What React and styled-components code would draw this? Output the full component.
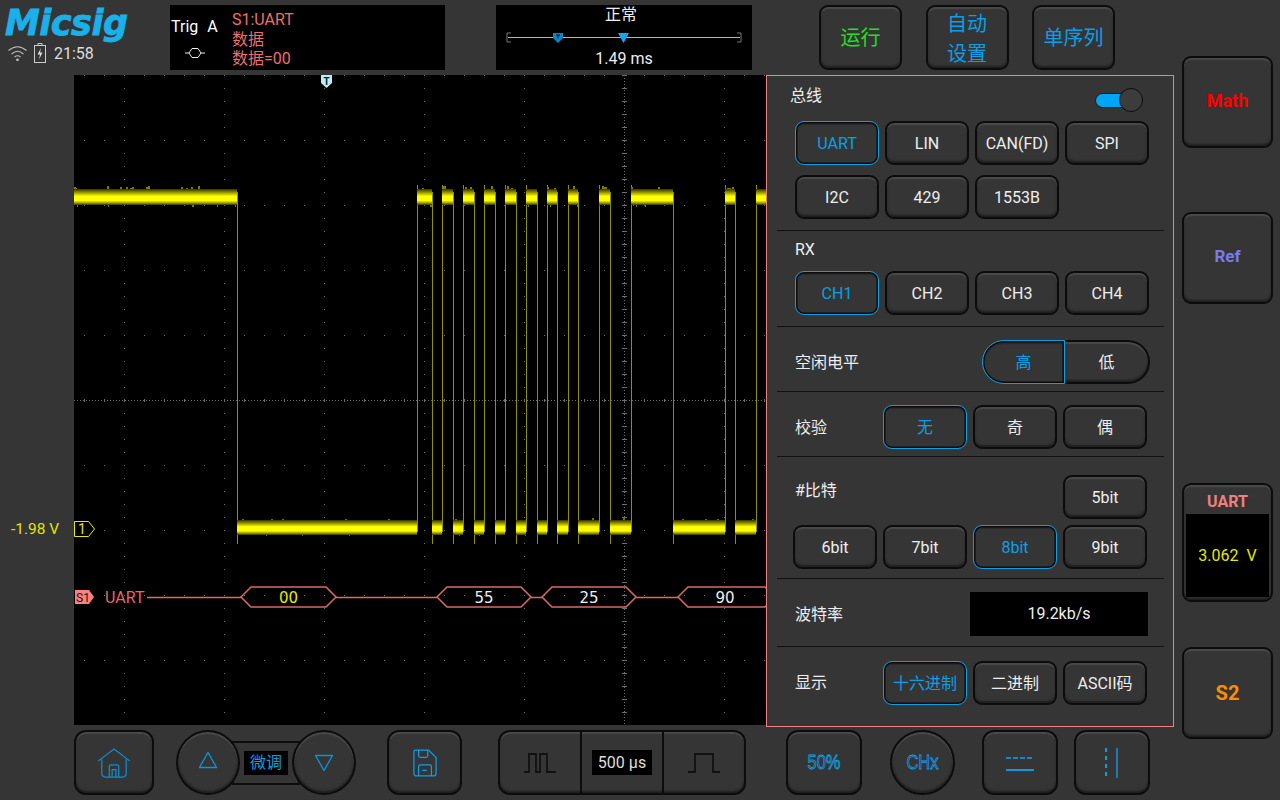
import React from 'react';
import styled, {createGlobalStyle} from 'styled-components';

const BLUE = '#0b9fe6';
const PINK = '#f08080';
const BG = '#353535';

const GlobalStyle = createGlobalStyle`
  html, body {
    margin: 0;
    padding: 0;
    background: ${BG};
    font-family: Roboto, "Noto Sans CJK SC", sans-serif;
    color: #eee;
  }
`;

const Page = styled.div`
  width: 1280px;
  height: 800px;
  display: flex;
  overflow: hidden;
  background: ${BG};
`;

const Main = styled.div`
  width: 1174px;
  display: flex;
  flex-direction: column;
`;

const TopBar = styled.div`
  height: 75px;
  box-sizing: border-box;
  padding-top: 5px;
  display: flex;
  align-items: flex-start;
`;

const Brand = styled.div`
  width: 170px;
  box-sizing: border-box;
  padding-left: 5px;
`;

const Logo = styled.div`
  font-family: "DejaVu Sans", sans-serif;
  font-weight: 700;
  font-style: italic;
  font-size: 35px;
  line-height: 36px;
  letter-spacing: -0.5px;
  color: #1ab0ea;
  -webkit-text-stroke: 0.8px #1ab0ea;
`;

const Status = styled.div`
  display: flex;
  align-items: center;
  gap: 6px;
  padding-left: 2px;
  height: 24px;
  font-size: 16px;
  color: #ddd;
`;

const StatusTime = styled.span`
  margin-left: 2px;
`;

const TrigBox = styled.div`
  width: 275px;
  height: 65px;
  background: #000;
  display: flex;
`;

const TrigLeft = styled.div`
  width: 62px;
  padding-left: 1px;
  box-sizing: border-box;
`;

const TrigName = styled.div`
  display: flex;
  gap: 9px;
  font-size: 16px;
  line-height: 20px;
  margin-top: 12px;
  color: #fff;
`;

const TrigSymbol = styled.svg`
  display: block;
  margin: 10px 0 0 14px;
`;

const TrigInfo = styled.div`
  font-size: 16px;
  line-height: 19.500px;
  padding-top: 5px;
  color: #ee6e6e;
`;

const TimeBox = styled.div`
  width: 256px;
  height: 65px;
  margin-left: 51px;
  background: #000;
  display: flex;
  flex-direction: column;
  align-items: center;
  font-size: 16px;
  color: #eee;
`;

const TimeTitle = styled.div`
  line-height: 20px;
  margin-right: 6px;
`;

const SliderSvg = styled.svg`
  display: block;
  margin-top: 4px;
`;

const TimeValue = styled.div`
  line-height: 20px;
`;

const TopButtons = styled.div`
  display: flex;
  gap: 23.500px;
  margin-left: 67px;
`;

const Key = styled.div`
  box-sizing: border-box;
  display: flex;
  align-items: center;
  justify-content: center;
  background: ${BG};
  border: 2px solid #0c0c0c;
  border-radius: ${p => p.$radius || 9}px;
  box-shadow: inset 0 2px 1px #4a4a4a, inset 0 -2px 2px #1f1f1f;
  text-align: center;
`;

const TopKey = styled(Key)`
  width: 83px;
  height: 65px;
  padding-top: ${p => p.$twoLines ? 2 : 0}px;
  font-size: 20px;
  line-height: 30px;
  color: ${p => p.$color || BLUE};
`;

const Middle = styled.div`
  height: 650px;
  display: flex;
  align-items: flex-start;
`;

const Gutter = styled.div`
  width: 74px;
  box-sizing: border-box;
  padding: 444px 0 0 11px;
  font-size: 15.500px;
  line-height: 20px;
  color: #e4e400;
`;

const ScreenSvg = styled.svg`
  display: block;
  width: 692px;
  height: 650px;
  background: #000;
`;

const TraceName = styled.text`
  font-family: Roboto, sans-serif;
  font-size: 16px;
  fill: #e06a6a;
`;

const ByteText = styled.text`
  font-family: "DejaVu Sans", sans-serif;
  font-size: 15px;
  text-anchor: middle;
  fill: ${p => p.$color || '#eee'};
`;

const MarkText = styled.text`
  font-family: Roboto, sans-serif;
  font-weight: ${p => p.$weight || 400};
  font-size: ${p => p.$size}px;
  text-anchor: middle;
  fill: ${p => p.$color};
`;

const Panel = styled.div`
  width: 408px;
  height: 652px;
  box-sizing: border-box;
  border: 1px solid ${PINK};
  background: ${BG};
  display: flex;
  flex-direction: column;
`;

const Section = styled.div`
  height: ${p => p.$height}px;
  box-sizing: border-box;
  margin: 0 9px 0 10px;
  padding-top: ${p => p.$top || 0}px;
  border-bottom: ${p => p.$last ? 'none' : '1px solid #111'};
`;

const Head = styled.div`
  height: ${p => p.$height}px;
  display: flex;
  justify-content: space-between;
  align-items: flex-start;
  padding-left: ${p => p.$indent}px;
`;

const Label = styled.div`
  font-size: 16px;
  line-height: 20px;
  margin-top: ${p => p.$top || 0}px;
  color: #eee;
`;

const Toggle = styled.div`
  position: relative;
  width: 34px;
  height: 13px;
  margin: 18px 34px 0 0;
  border-radius: 7px;
  background: #00a6f5;
  box-shadow: 0 0 0 1px #222;
`;

const Knob = styled.div`
  position: absolute;
  right: -13px;
  top: -6px;
  width: 24px;
  height: 24px;
  box-sizing: border-box;
  border-radius: 50%;
  border: 1px solid #0c0c0c;
  background: #3c3c3c;
`;

const ButtonGrid = styled.div`
  display: grid;
  grid-template-columns: repeat(4, 84px);
  grid-auto-rows: 44px;
  gap: 10px 6px;
  padding-left: ${p => p.$indent ?? 18}px;
`;

const OptKey = styled(Key)`
  width: 84px;
  height: 44px;
  font-size: 16px;
  padding-bottom: ${p => p.$cjk ? 2 : 0}px;
  color: ${p => p.$on ? BLUE : '#eee'};
  ${p => p.$on && `
    border: 1px solid ${BLUE};
    box-shadow: inset 0 0 0 1.500px #0c0c0c, inset 0 3px 1px #2a2a2a;
  `}
`;

const OptionRow = styled.div`
  height: 100%;
  display: flex;
  align-items: center;
  justify-content: space-between;
  padding: 0 ${p => p.$right ?? 17}px 0 18px;
`;

const OptKeys = styled.div`
  display: flex;
  gap: 6px;
`;

const Segmented = styled.div`
  display: flex;
  width: 168px;
  height: 44px;
`;

const SegKey = styled(OptKey)`
  width: ${p => p.$on ? 83 : 85}px;
  border-radius: ${p => p.$on ? '22px 0 0 22px' : '0 22px 22px 0'};
  ${p => !p.$on && 'border-left: none;'}
`;

const BitsTop = styled.div`
  display: flex;
  justify-content: space-between;
  padding: 0 17px 6px 18px;
`;

const BaudField = styled.div`
  width: 178px;
  height: 44px;
  background: #000;
  display: flex;
  align-items: center;
  justify-content: center;
  font-size: 16px;
  color: #eee;
`;

const BottomBar = styled.div`
  height: 75px;
  box-sizing: border-box;
  padding: 5px 0 0 74px;
  display: flex;
  align-items: flex-start;
`;

const BarKey = styled(Key)`
  width: ${p => p.$width}px;
  height: 65px;
  margin-left: ${p => p.$left || 0}px;
  border-radius: ${p => p.$radius || 12}px;
`;

const OutlineLabel = styled.span`
  display: inline-block;
  font-family: "Liberation Sans", sans-serif;
  font-size: 20px;
  transform: scaleX(0.82);
  color: ${BG};
  -webkit-text-stroke: 0.8px #10a4ee;
`;

const FineGroup = styled.div`
  display: flex;
  align-items: center;
  margin-left: 22px;
`;

const Circle = styled(Key)`
  width: 64px;
  height: 65px;
  border-radius: 50%;
  position: relative;
  z-index: 1;
`;

const FinePill = styled.div`
  width: 68px;
  height: 44px;
  margin: 0 -8px;
  box-sizing: border-box;
  border: 2px solid #0c0c0c;
  background: ${BG};
  display: flex;
  align-items: center;
  justify-content: center;
`;

const FineLabel = styled.div`
  width: 44px;
  height: 24px;
  background: #000;
  color: ${BLUE};
  font-size: 16px;
  line-height: 24px;
  text-align: center;
`;

const TriangleSvg = styled.svg`
  display: block;
  margin-top: ${p => p.$down ? 0 : -6}px;
  transform: ${p => p.$down ? 'rotate(180deg)' : 'none'};
`;

const TimeGroup = styled(Key)`
  width: 248px;
  height: 65px;
  margin-left: 36px;
  border-radius: 12px;
`;

const TimeCell = styled.div`
  flex: 1;
  height: 100%;
  display: flex;
  align-items: center;
  justify-content: center;
  & + & {
    border-left: 2px solid #0c0c0c;
  }
`;

const TimeLabel = styled.div`
  width: 60px;
  height: 25px;
  background: #000;
  font-size: 16px;
  line-height: 25px;
  text-align: center;
  color: #ddd;
`;

const Rail = styled.div`
  width: 106px;
  box-sizing: border-box;
  padding: 56px 0 0 8px;
  display: flex;
  flex-direction: column;
`;

const RailKey = styled(Key)`
  width: 91px;
  height: 92px;
  margin-top: ${p => p.$top || 0}px;
  padding-bottom: ${p => p.$lift || 0}px;
  font-weight: 700;
  font-size: ${p => p.$size}px;
  color: ${p => p.$color};
`;

const MeterCard = styled(Key)`
  width: 91px;
  height: 119px;
  margin-top: 179px;
  flex-direction: column;
  justify-content: flex-start;
  padding: 0 2px 3px;
`;

const MeterTitle = styled.div`
  height: 29px;
  line-height: 33px;
  font-weight: 700;
  font-size: 16px;
  color: ${PINK};
`;

const MeterValue = styled.div`
  width: 100%;
  flex: 1;
  background: #000;
  display: flex;
  align-items: center;
  justify-content: center;
  font-size: 16px;
  white-space: pre;
  color: #e8e800;
`;

// page coordinates of the logic high parts of the trace
const HIGHS = [
    [74, 237], [417, 432], [442, 453], [463, 474], [484, 495], [505, 516], [526, 537],
    [547, 557], [568, 578], [599, 610], [631, 673], [725, 735], [756, 767],
];
const LOWS = [
    [237, 417], [432, 442], [453, 463], [474, 484], [495, 505], [516, 526], [537, 547],
    [557, 568], [578, 599], [610, 631], [673, 725], [735, 756],
];
const BYTES = [
    {from: 241, to: 336, text: '00', color: '#e8e800'},
    {from: 437, to: 531, text: '55'},
    {from: 542, to: 636, text: '25'},
    {from: 678, to: 775, text: '90'},
];

const noise = n => {
    const v = Math.sin(n * 12.9898) * 43758.5453;
    return v - Math.floor(v);
};

const gridDots = () => {
    let d = '';
    for (let x = 124; x <= 724; x += 100) {
        if (x === 624) continue;
        for (let y = 75; y <= 725; y += 13) d += `M${x} ${y}h1v1h-1z`;
    }
    for (let y = 75; y <= 725; y += 65) {
        if (y === 400) continue;
        for (let x = 84; x <= 766; x += 20) d += `M${x} ${y}h1v1h-1z`;
    }
    for (let y = 75; y <= 725; y += 13) d += `M622 ${y}h5v1h-5z`;
    for (let x = 84; x <= 766; x += 20) d += `M${x} 399h1v3h-1z`;
    return d;
};

// little glitches standing out of a band
const spikes = (segments, top, bottom, amount) => {
    let d = '';
    segments.forEach(([from, to]) => {
        for (let x = from; x < to; x += 1) {
            const r = noise(x + top);
            if (r > 1 - amount) d += `M${x} ${top - 1 - Math.round((r - 1 + amount) * 20)}h2v4h-2z`;
            if (r < amount / 2) d += `M${x} ${bottom - 2}h1v${3 + Math.round(r * 30)}h-1z`;
        }
    });
    return d;
};

const BandStops = () => (
    <>
        <stop offset="0" stopColor="#333300"/>
        <stop offset="0.25" stopColor="#a4a400"/>
        <stop offset="0.45" stopColor="#ffff00"/>
        <stop offset="0.72" stopColor="#ffff00"/>
        <stop offset="0.86" stopColor="#a4a400"/>
        <stop offset="1" stopColor="#333300"/>
    </>
);

const Waveform = () => (
    <g>
        <defs>
            <linearGradient id="highBand" gradientUnits="userSpaceOnUse" x1="0" y1="189" x2="0" y2="205">
                <BandStops/>
            </linearGradient>
            <linearGradient id="lowBand" gradientUnits="userSpaceOnUse" x1="0" y1="520" x2="0" y2="535">
                <BandStops/>
            </linearGradient>
        </defs>
        {HIGHS.slice(1).map(([from]) => (
            <path key={from} d={`M${from + 0.5} 185V532`} stroke="#8f8f00" fill="none"/>
        ))}
        {HIGHS.slice(0, -1).map(([, to]) => (
            <path key={to} d={`M${to + 0.5} 192V544`} stroke="#8f8f00" fill="none"/>
        ))}
        <path d={spikes(HIGHS, 189, 205, 0.1)} fill="#7c7c00"/>
        <path d={spikes(LOWS, 520, 535, 0.03)} fill="#6f6f00"/>
        {HIGHS.map(([from, to]) => (
            <rect key={from} x={from} y={189} width={to - from} height={16} fill="url(#highBand)"/>
        ))}
        {LOWS.map(([from, to]) => (
            <rect key={from} x={from} y={520} width={to - from} height={15} fill="url(#lowBand)"/>
        ))}
    </g>
);

const hexagon = (from, to) => (
    `${from},597 ${from + 10},587 ${to - 10},587 ${to},597 ${to - 10},607 ${from + 10},607`
);

const Screen = () => (
    <ScreenSvg viewBox="74 75 692 650">
        <path d={gridDots()} fill="#6e6e6e"/>
        <path d="M624.500 75V725M74 400.500H766" stroke="#6e6e6e" strokeDasharray="1 2" fill="none"/>
        <Waveform/>
        <path d="M321 75h11v8l-5.500 5-5.500-5z" fill="#b8f0f6"/>
        <MarkText x={326.500} y={85} $size={10} $weight={700} $color="#123">T</MarkText>
        <path d="M74.500 521.500h14l6 7.500-6 7.500h-14z" fill="#000" stroke="#e8e800"/>
        <MarkText x={82} y={534} $size={14} $color="#e8e800">1</MarkText>
        <path d="M75 590h14l5 7-5 7H75z" fill="#ff8080"/>
        <MarkText x={83} y={601.500} $size={12} $color="#2a1010">S1</MarkText>
        <TraceName x={105} y={603}>UART</TraceName>
        <path d="M147 597.500H241M336 597.500H437M531 597.500H542M636 597.500H678" stroke="#d96a6a" strokeWidth="1.500" fill="none"/>
        {BYTES.map(b => (
            <g key={b.from}>
                <polygon points={hexagon(b.from, b.to)} fill="none" stroke="#d96a6a" strokeWidth="1.500"/>
                <ByteText x={(b.from + Math.min(b.to, 772)) / 2} y={603} $color={b.color}>{b.text}</ByteText>
            </g>
        ))}
    </ScreenSvg>
);

const WifiIcon = () => (
    <svg width="21" height="16" viewBox="0 0 20 16" fill="none" stroke="#bbb" strokeWidth="1.100">
        <path d="M1 5.500Q10 -2 19 5.500"/>
        <path d="M4 9Q10 3.500 16 9"/>
        <path d="M7 12Q10 9.500 13 12"/>
        <circle cx="10" cy="14.800" r="0.800" fill="#bbb"/>
    </svg>
);

const BatteryIcon = () => (
    <svg width="12" height="20" viewBox="0 0 12 20" fill="none" stroke="#ccc" strokeWidth="1">
        <path d="M4 .500h4v2M4 .500v2"/>
        <rect x=".500" y="2.500" width="11" height="17"/>
        <path d="M7 5L3.500 11.500H6L5 16.500L8.500 9.500H6z" fill="#ddd" stroke="none"/>
    </svg>
);

const TimeSlider = () => (
    <SliderSvg width="236" height="20" viewBox="0 0 236 20" fill="none">
        <path d="M5 4H1V13H5M231 4H235V13H231" stroke="#777"/>
        <path d="M2 8.500H234" stroke="#e8a0a0"/>
        <path d="M47 4h10v5l-5 5-5-5z" fill="#0b85c8"/>
        <path d="M50 5.500h4v1h-1.500v3h-1v-3H50z" fill="#012"/>
        <path d="M112 4h11l-5.500 10z" fill="#10a8f5"/>
    </SliderSvg>
);

const HomeIcon = () => (
    <svg width="34" height="30" viewBox="0 0 36 32" fill="none" stroke="#0c8fd6" strokeWidth="1.300">
        <path d="M1 14L18 1L35 14"/>
        <path d="M5 12V27Q5 31 9 31H27Q31 31 31 27V12"/>
        <path d="M13 31V20Q13 18 15 18H21Q23 18 23 20V31"/>
        <path d="M16 31V23H20V31"/>
    </svg>
);

const TriangleIcon = ({down}) => (
    <TriangleSvg $down={down} width="20" height="18" viewBox="0 0 20 18" fill="none" stroke="#0b94dc" strokeWidth="1.300" strokeLinejoin="round">
        <path d="M10 1.500L18.500 16.500H1.500z"/>
    </TriangleSvg>
);

const SaveIcon = () => (
    <svg width="24" height="28" viewBox="0 0 26 30" fill="none" stroke="#0f9fe8" strokeWidth="1.300">
        <path d="M3 1H17L25 9V26Q25 29 22 29H4Q1 29 1 26V3Q1 1 3 1z"/>
        <path d="M6 1V7Q6 9 8 9H14Q16 9 16 7V1"/>
        <path d="M6 29V19Q6 17 8 17H18Q20 17 20 19V29"/>
        <path d="M10 23H15"/>
    </svg>
);

const FastPulse = () => (
    <svg width="32" height="22" viewBox="0 0 32 22" fill="none" stroke="#111" strokeWidth="1.800">
        <path d="M0 20H5V2H12V20H16V2H23V20H32"/>
    </svg>
);

const SlowPulse = () => (
    <svg width="32" height="22" viewBox="0 0 32 22" fill="none" stroke="#111" strokeWidth="1.800">
        <path d="M0 20H7V2H25V20H32"/>
    </svg>
);

const LevelIcon = () => (
    <svg width="30" height="20" viewBox="0 0 30 20" fill="none" stroke="#10a4ee">
        <path d="M1 5H29" strokeWidth="1.300" strokeDasharray="5 2"/>
        <path d="M1 17H29" strokeWidth="1.800"/>
    </svg>
);

const CursorIcon = () => (
    <svg width="18" height="30" viewBox="0 0 18 30" fill="none" stroke="#10a4ee">
        <path d="M3 0V30" strokeWidth="1.800" strokeDasharray="4 4"/>
        <path d="M14 0V30" strokeWidth="1.300"/>
    </svg>
);

const BUS = ['UART', 'LIN', 'CAN(FD)', 'SPI', 'I2C', '429', '1553B'];
const RX = ['CH1', 'CH2', 'CH3', 'CH4'];
const PARITY = ['无', '奇', '偶'];
const BITS = ['6bit', '7bit', '8bit', '9bit'];
const DISPLAY = ['十六进制', '二进制', 'ASCII码'];

const BusPanel = () => (
    <Panel>
        <Section $height={155}>
            <Head $height={45} $indent={13}>
                <Label $top={10}>总线</Label>
                <Toggle><Knob/></Toggle>
            </Head>
            <ButtonGrid>
                {BUS.map(b => <OptKey key={b} $on={b === 'UART'}>{b}</OptKey>)}
            </ButtonGrid>
        </Section>
        <Section $height={96}>
            <Head $height={40} $indent={18}>
                <Label $top={9}>RX</Label>
            </Head>
            <ButtonGrid>
                {RX.map(c => <OptKey key={c} $on={c === 'CH1'}>{c}</OptKey>)}
            </ButtonGrid>
        </Section>
        <Section $height={65} $top={6}>
            <OptionRow $right={14}>
                <Label $top={1}>空闲电平</Label>
                <Segmented>
                    <SegKey $on $cjk>高</SegKey>
                    <SegKey $cjk>低</SegKey>
                </Segmented>
            </OptionRow>
        </Section>
        <Section $height={65} $top={6}>
            <OptionRow>
                <Label $top={2}>校验</Label>
                <OptKeys>
                    {PARITY.map(p => <OptKey key={p} $cjk $on={p === '无'}>{p}</OptKey>)}
                </OptKeys>
            </OptionRow>
        </Section>
        <Section $height={122} $top={18}>
            <BitsTop>
                <Label $top={6}>#比特</Label>
                <OptKey>5bit</OptKey>
            </BitsTop>
            <ButtonGrid $indent={16}>
                {BITS.map(b => <OptKey key={b} $on={b === '8bit'}>{b}</OptKey>)}
            </ButtonGrid>
        </Section>
        <Section $height={68} $top={2}>
            <OptionRow $right={16}>
                <Label $top={2}>波特率</Label>
                <BaudField>19.2kb/s</BaudField>
            </OptionRow>
        </Section>
        <Section $height={72} $last>
            <OptionRow>
                <Label>显示</Label>
                <OptKeys>
                    {DISPLAY.map(d => <OptKey key={d} $cjk $on={d === '十六进制'}>{d}</OptKey>)}
                </OptKeys>
            </OptionRow>
        </Section>
    </Panel>
);

export default function App() {
    return (
        <Page>
            <GlobalStyle/>
            <Main>
                <TopBar>
                    <Brand>
                        <Logo>Micsig</Logo>
                        <Status>
                            <WifiIcon/>
                            <BatteryIcon/>
                            <StatusTime>21:58</StatusTime>
                        </Status>
                    </Brand>
                    <TrigBox>
                        <TrigLeft>
                            <TrigName><span>Trig</span><span>A</span></TrigName>
                            <TrigSymbol width="20" height="12" viewBox="0 0 20 12" fill="none" stroke="#eee">
                                <path d="M0 6H4L7 1.500H13L16 6H20M4 6L7 10.500H13L16 6"/>
                            </TrigSymbol>
                        </TrigLeft>
                        <TrigInfo>
                            <div>S1:UART</div>
                            <div>数据</div>
                            <div>数据=00</div>
                        </TrigInfo>
                    </TrigBox>
                    <TimeBox>
                        <TimeTitle>正常</TimeTitle>
                        <TimeSlider/>
                        <TimeValue>1.49 ms</TimeValue>
                    </TimeBox>
                    <TopButtons>
                        <TopKey $color="#22e022">运行</TopKey>
                        <TopKey $twoLines>自动<br/>设置</TopKey>
                        <TopKey>单序列</TopKey>
                    </TopButtons>
                </TopBar>
                <Middle>
                    <Gutter>-1.98 V</Gutter>
                    <Screen/>
                    <BusPanel/>
                </Middle>
                <BottomBar>
                    <BarKey $width={80}><HomeIcon/></BarKey>
                    <FineGroup>
                        <Circle><TriangleIcon/></Circle>
                        <FinePill><FineLabel>微调</FineLabel></FinePill>
                        <Circle><TriangleIcon down/></Circle>
                    </FineGroup>
                    <BarKey $width={75} $left={31}><SaveIcon/></BarKey>
                    <TimeGroup>
                        <TimeCell><FastPulse/></TimeCell>
                        <TimeCell><TimeLabel>500 µs</TimeLabel></TimeCell>
                        <TimeCell><SlowPulse/></TimeCell>
                    </TimeGroup>
                    <BarKey $width={76} $left={40}><OutlineLabel>50%</OutlineLabel></BarKey>
                    <BarKey $width={65} $left={28} $radius={33}><OutlineLabel>CHx</OutlineLabel></BarKey>
                    <BarKey $width={76} $left={27}><LevelIcon/></BarKey>
                    <BarKey $width={76} $left={16}><CursorIcon/></BarKey>
                </BottomBar>
            </Main>
            <Rail>
                <RailKey $size={18} $lift={4} $color="#ff0000">Math</RailKey>
                <RailKey $top={64} $size={17} $lift={4} $color="#7b7bf0">Ref</RailKey>
                <MeterCard>
                    <MeterTitle>UART</MeterTitle>
                    <MeterValue>3.062  V</MeterValue>
                </MeterCard>
                <RailKey $top={45} $size={20} $color="#ff8c00">S2</RailKey>
            </Rail>
        </Page>
    );
}
